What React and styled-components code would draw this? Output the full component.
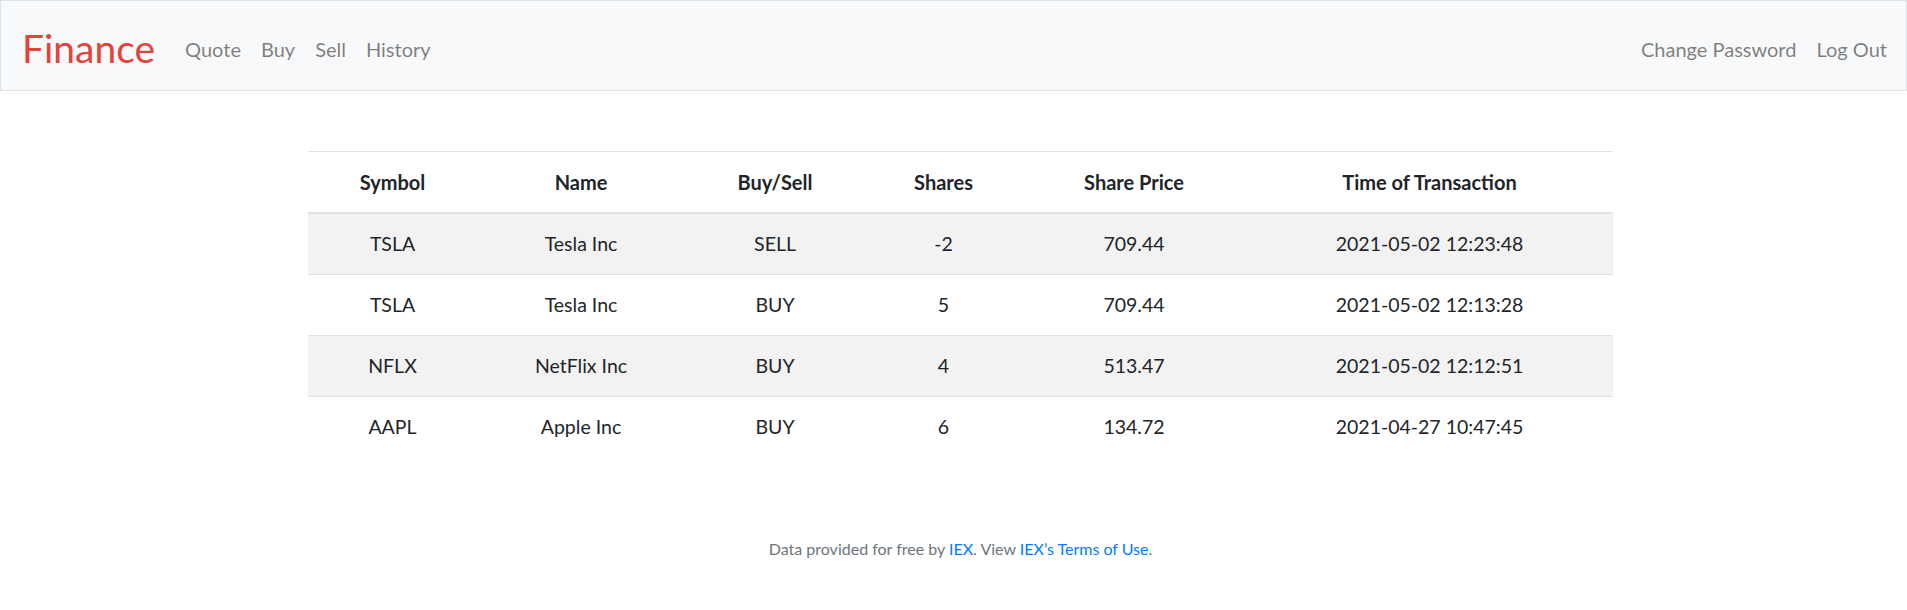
import styled, { createGlobalStyle } from "styled-components";

const GlobalStyle = createGlobalStyle`
  html, body {
    margin: 0;
    padding: 0;
    background: #fff;
    font-family: Lato, "Open Sans", "Liberation Sans", sans-serif;
    color: #212529;
  }
  * { box-sizing: border-box; }
`;

const Nav = styled.nav`
  display: flex;
  align-items: center;
  height: 91px;
  padding: 0 9px 0 21px;
  background: #f8f9fa;
  border: 1px solid #dee2e6;
`;

const Brand = styled.a`
  font-size: 39px;
  line-height: 60px;
  color: #e2443c;
  margin-right: 20px;
  padding-top: 5px;
  text-decoration: none;
`;

const Links = styled.ul`
  display: flex;
  list-style: none;
  margin: 0;
  padding: 6px 0 0;
  margin-left: ${(p) => (p.$right ? "auto" : "0")};
`;

const NavLink = styled.a`
  display: block;
  padding: 0 10px;
  font-size: 20px;
  line-height: 30px;
  color: rgba(0, 0, 0, 0.5);
  text-decoration: none;
`;

const Main = styled.main`
  padding: 60px 0 60px 14px;
  text-align: center;
`;

const Table = styled.table`
  width: 1305px;
  margin: 0 auto 20px;
  border-collapse: collapse;
  table-layout: fixed;
  font-size: 20px;
  line-height: 30px;
`;

const Th = styled.th`
  width: ${(p) => p.$w}px;
  padding: 15px;
  font-weight: 700;
  border-top: 1px solid #dee2e6;
  border-bottom: 2px solid #dee2e6;
`;

const Row = styled.tr`
  background: ${(p) => (p.$striped ? "#f2f2f2" : "transparent")};
`;

const Td = styled.td`
  padding: 15px;
  font-size: 19.5px;
  border-top: 1px solid #dee2e6;
`;

const Footer = styled.footer`
  padding-left: 14px;
  text-align: center;
  font-size: 16px;
  line-height: 24px;
  color: #6c757d;

  a {
    color: #007bff;
    text-decoration: none;
  }
`;

const columns = [
  ["Symbol", 169],
  ["Name", 208],
  ["Buy/Sell", 180],
  ["Shares", 157],
  ["Share Price", 224],
  ["Time of Transaction", 367],
];

const transactions = [
  ["TSLA", "Tesla Inc", "SELL", "-2", "709.44", "2021-05-02 12:23:48"],
  ["TSLA", "Tesla Inc", "BUY", "5", "709.44", "2021-05-02 12:13:28"],
  ["NFLX", "NetFlix Inc", "BUY", "4", "513.47", "2021-05-02 12:12:51"],
  ["AAPL", "Apple Inc", "BUY", "6", "134.72", "2021-04-27 10:47:45"],
];

export default function App() {
  return (
    <>
      <GlobalStyle />
      <Nav>
        <Brand href="#">Finance</Brand>
        <Links>
          <li><NavLink href="#">Quote</NavLink></li>
          <li><NavLink href="#">Buy</NavLink></li>
          <li><NavLink href="#">Sell</NavLink></li>
          <li><NavLink href="#">History</NavLink></li>
        </Links>
        <Links $right>
          <li><NavLink href="#">Change Password</NavLink></li>
          <li><NavLink href="#">Log Out</NavLink></li>
        </Links>
      </Nav>
      <Main>
        <Table>
          <thead>
            <tr>
              {columns.map(([label, w]) => (
                <Th key={label} $w={w}>{label}</Th>
              ))}
            </tr>
          </thead>
          <tbody>
            {transactions.map((t, i) => (
              <Row key={i} $striped={i % 2 === 0}>
                {t.map((cell, j) => (
                  <Td key={j}>{cell}</Td>
                ))}
              </Row>
            ))}
          </tbody>
        </Table>
      </Main>
      <Footer>
        Data provided for free by <a href="#">IEX</a>. View{" "}
        <a href="#">IEX’s Terms of Use</a>.
      </Footer>
    </>
  );
}
